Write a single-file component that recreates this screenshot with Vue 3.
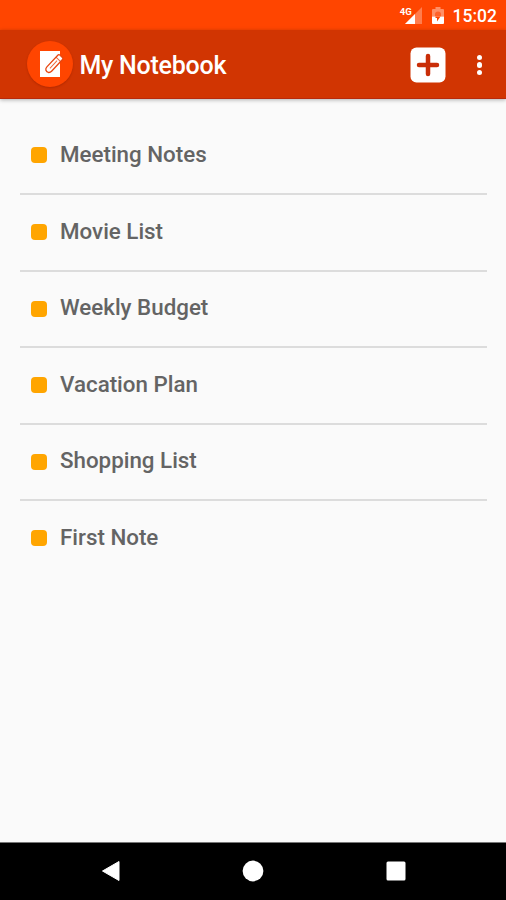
<script setup>
const notes = ['Meeting Notes', 'Movie List', 'Weekly Budget', 'Vacation Plan', 'Shopping List', 'First Note']
</script>

<template>
  <div class="screen">
    <div class="status">
      <svg class="signal" width="24" height="20" viewBox="0 0 24 20">
        <path d="M23 1V18H6Z" fill="#fff" fill-opacity=".3" />
        <path d="M16 8V18H6Z" fill="#fff" />
        <text x="0.8" y="8.5" class="net">4G</text>
      </svg>
      <svg class="battery" width="14" height="20" viewBox="0 0 14 20">
        <path d="M4.500 1h5v2H12a1 1 0 0 1 1 1v6.500H1V4a1 1 0 0 1 1-1h2.500z" fill="#fff" fill-opacity=".4" />
        <path d="M4 10.500V8.500a3 3 0 0 1 6 0v2z" fill="#ff4500" fill-opacity=".6" />
        <path d="M1 10.500h12V17a1 1 0 0 1-1 1H2a1 1 0 0 1-1-1z" fill="#fff" />
        <path d="M6 15.500V12H4.500V10.500H9.500z" fill="#ff4500" />
      </svg>
      <span class="time">15:02</span>
    </div>
    <header class="bar">
      <div class="logo">
        <svg width="26" height="28" viewBox="0 0 26 28">
          <rect x="1" y="1" width="20" height="26" fill="#fff" />
          <g transform="translate(7.500 22) rotate(-47)">
            <path d="M0.500 0L1 -1.800Q2 -3.200 4 -3.200H20a1.500 1.500 0 0 1 1.500 1.500V1.700a1.500 1.500 0 0 1-1.500 1.500H4Q2 3.200 1 1.800z" fill="#fff" stroke="#e84610" stroke-width="1.300" stroke-linejoin="round" />
            <path d="M5 0H15.500M17.300 -3.200V3.200" stroke="#e84610" stroke-width="1" stroke-opacity=".8" fill="none" />
          </g>
        </svg>
      </div>
      <h1>My Notebook</h1>
      <button class="add" aria-label="Add note">
        <svg width="36" height="36" viewBox="0 0 36 36">
          <rect x="0.500" y="0.500" width="35" height="35" rx="6" fill="#fff" />
          <path d="M18 9V27M9 18H27" stroke="#c92e08" stroke-width="4.500" stroke-linecap="round" />
        </svg>
      </button>
      <button class="more" aria-label="More options">
        <i></i><i></i><i></i>
      </button>
    </header>
    <ul class="list">
      <li v-for="note in notes" :key="note">
        <span class="mark"></span>
        <span class="name">{{ note }}</span>
      </li>
    </ul>
    <nav class="nav">
      <svg width="20" height="22" viewBox="0 0 20 22"><path d="M18 1.500V20.500L1.500 11z" fill="#fff" stroke="#fff" stroke-linejoin="round" /></svg>
      <svg width="22" height="22" viewBox="0 0 22 22"><circle cx="11" cy="11" r="10.400" fill="#fff" /></svg>
      <svg width="20" height="20" viewBox="0 0 20 20"><rect x="0.500" y="0.500" width="19" height="19" rx="1.500" fill="#fff" /></svg>
    </nav>
  </div>
</template>

<style>
body {
  margin: 0;
}
</style>

<style scoped>
.screen {
  width: 506px;
  height: 900px;
  display: flex;
  flex-direction: column;
  background: #fafafa;
  font-family: Roboto, sans-serif;
  overflow: hidden;
}
.status {
  height: 30px;
  flex: none;
  box-sizing: border-box;
  display: flex;
  align-items: center;
  justify-content: flex-end;
  padding: 1px 9px 0 0;
  background: #ff4500;
  color: #fff;
}
.signal {
  margin: 0 8px 0 0;
}
.battery {
  margin: 0 8px 0 0;
}
.net {
  font: 700 9.500px Roboto, sans-serif;
  fill: #fff;
}
.time {
  font-size: 17.500px;
  font-weight: 500;
  line-height: 30px;
}
.bar {
  height: 69px;
  flex: none;
  box-sizing: border-box;
  display: flex;
  align-items: center;
  padding-left: 27px;
  background: #d13502;
  border-bottom: 1px solid #b82a0c;
  box-shadow: 0 1px 4px rgba(0, 0, 0, 0.3);
}
.logo {
  width: 46px;
  height: 46px;
  border-radius: 50%;
  background: #ff4500;
  display: flex;
  align-items: center;
  justify-content: center;
  box-sizing: border-box;
  box-shadow: 0 1px 2px rgba(90, 10, 0, 0.25);
}
.logo svg {
  margin-left: 4px;
}
h1 {
  margin: 4px 0 0 6.500px;
  font-size: 25px;
  letter-spacing: -0.250px;
  line-height: 30px;
  font-weight: 500;
  color: #fff;
  flex: 1;
}
button {
  padding: 0;
  border: 0;
  background: none;
  display: flex;
}
.add {
  margin-top: 1px;
}
.more {
  width: 6px;
  flex-direction: column;
  gap: 2px;
  margin: 2px 23.500px 0 30.500px;
}
.more i {
  width: 5.500px;
  height: 5.500px;
  border-radius: 50%;
  background: #fff;
}
.list {
  list-style: none;
  margin: 0;
  padding: 19.400px 19px 0 20px;
  flex: 1;
}
.list li {
  height: 76.600px;
  box-sizing: border-box;
  display: flex;
  align-items: center;
  padding: 0 0 3.400px 10px;
  border-bottom: 2px solid #dcdcdc;
}
.list li:last-child {
  border-color: transparent;
}
.mark {
  width: 16px;
  height: 16px;
  border-radius: 4px;
  background: #ffa500;
  margin: 3px 13.500px 0 0.500px;
}
.name {
  font-size: 22.350px;
  line-height: 28px;
  font-weight: 500;
  color: #646464;
}
.nav {
  height: 58px;
  flex: none;
  box-sizing: border-box;
  display: flex;
  align-items: center;
  justify-content: space-between;
  padding: 0 100px 2px 101px;
  background: #000;
  border-top: 1px solid #777;
}
.nav svg:nth-child(2) {
  margin-left: -1px;
}
</style>
